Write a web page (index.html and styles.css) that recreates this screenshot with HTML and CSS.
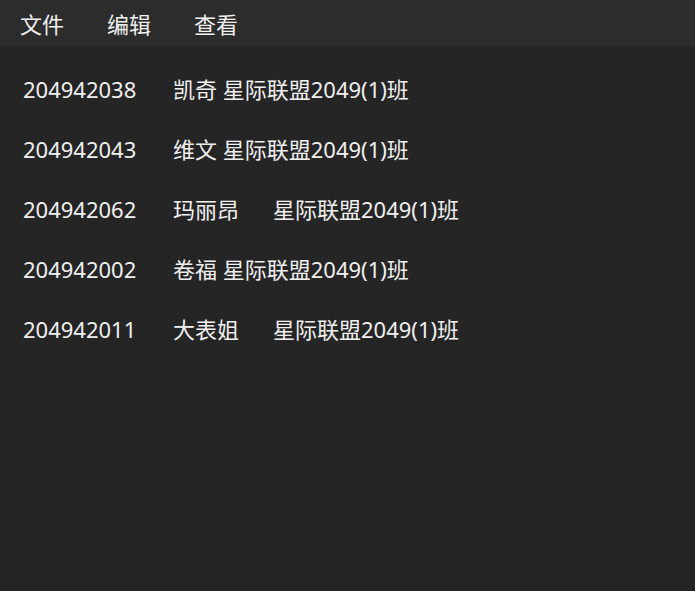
FILE: index.html
```html
<!DOCTYPE html>
<html lang="zh-CN">
<head>
    <meta charset="UTF-8">
    <title>学生名单</title>
    <link rel="stylesheet" href="styles.css">
</head>
<body>
    <div class="menubar">
        <span class="menu-item">文件</span>
        <span class="menu-item">编辑</span>
        <span class="menu-item">查看</span>
    </div>
    <div class="content">
<div class="row">204942038	凯奇 星际联盟2049(1)班</div>
<div class="row">204942043	维文 星际联盟2049(1)班</div>
<div class="row">204942062	玛丽昂	星际联盟2049(1)班</div>
<div class="row">204942002	卷福 星际联盟2049(1)班</div>
<div class="row">204942011	大表姐	星际联盟2049(1)班</div>
    </div>
</body>
</html>
```

FILE: styles.css
```css
body {
    margin: 0;
    height: 100vh;
    background-color: #252525;
    color: #f0f0f0;
    font-family: "Noto Sans", "Noto Sans CJK SC", sans-serif;
}
.menubar {
    display: flex;
    align-items: center;
    gap: 43px;
    height: 46px;
    padding: 0 20px;
    background-color: #2c2c2c;
    font-size: 22px;
}
.content {
    padding: 13px 23px 0;
}
.row {
    white-space: pre;
    tab-size: 50px;
    font-size: 22px;
    line-height: 60px;
}
```
